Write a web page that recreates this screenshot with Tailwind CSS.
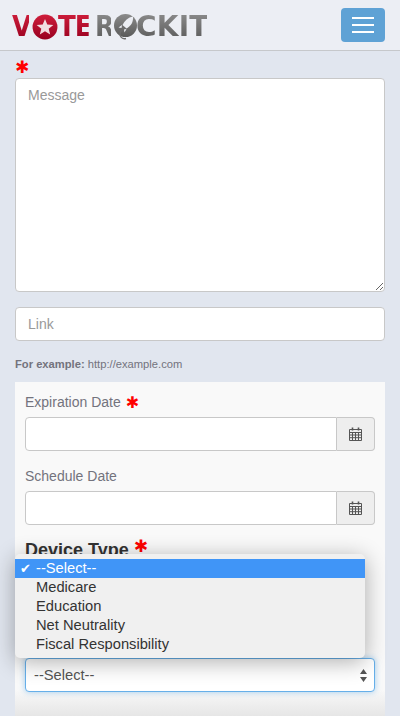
<!DOCTYPE html>
<html lang="en">
<head>
    <meta charset="UTF-8">
    <meta name="viewport" content="width=device-width, initial-scale=1.0">
    <title>VoteRockit</title>
    <script src="https://cdn.jsdelivr.net/npm/@tailwindcss/browser@4"></script>
</head>
<body class="h-[716px] w-[400px] overflow-hidden bg-[#e1e6ef] font-['Liberation_Sans',Arial,sans-serif] text-[#73737d]">
    <!-- Navbar -->
    <header class="flex h-[51px] items-start justify-between border-b border-[#c6c8cb] bg-[#eceef4] pr-[15px] pl-[12px]">
        <div class="mt-[13px] flex h-[28px] items-center text-[28px] leading-[28px] font-bold font-['DejaVu_Sans',sans-serif]">
            <span class="w-[19px] origin-left scale-x-[.9] bg-gradient-to-b from-[#cf1d3b] to-[#98001f] bg-clip-text text-transparent">V</span>
            <svg class="ml-[1px] h-[26px] w-[26px] shrink-0" viewBox="0 0 24 24">
                <defs><linearGradient id="red" x1="0" y1="0" x2="0" y2="1"><stop offset="0" stop-color="#cf1d3b"/><stop offset="1" stop-color="#98001f"/></linearGradient></defs>
                <circle cx="12" cy="12" r="11.500" fill="url(#red)"/>
                <path d="M12 4.500l2.100 5.200 5.600.4-4.300 3.500 1.400 5.400-4.800-3-4.800 3 1.400-5.400-4.300-3.500 5.600-.4z" fill="#f1dde1"/>
            </svg>
            <span class="w-[33px] origin-left scale-x-[.93] tracking-[-1px] bg-gradient-to-b from-[#cf1d3b] to-[#98001f] bg-clip-text text-transparent">TE</span>
            <span class="ml-[4px] w-[18px] origin-left scale-x-[.9] bg-gradient-to-b from-[#8b8b8b] to-[#5a5a5a] bg-clip-text text-transparent">R</span>
            <svg class="h-[28px] w-[25px] shrink-0" viewBox="0 0 25 28">
                <defs><linearGradient id="gray" x1="0" y1="0" x2="0" y2="1"><stop offset="0" stop-color="#8b8b8b"/><stop offset="1" stop-color="#5a5a5a"/></linearGradient></defs>
                <circle cx="12.500" cy="12.500" r="11.500" fill="url(#gray)"/>
                <path d="M20 3.500c-5 1-8.500 4-10.500 8.500l4 3.500c4.500-2.500 7-6.500 6.500-12z" fill="#eceef4"/>
                <path d="M9 12l-3.500 2.500 3 .5zM13.500 16l-2 3.500-.5-3z" fill="#eceef4"/>
                <path d="M9 17c-2 2-2.500 5-1 7 1 1.500 3 2 5 1.500" fill="none" stroke="#6d6d6d" stroke-width="1.300"/>
            </svg>
            <span class="ml-[-2px] w-[71px] origin-left bg-gradient-to-b from-[#8b8b8b] to-[#5a5a5a] bg-clip-text tracking-[.2px] text-transparent">CKIT</span>
        </div>
        <button class="mt-[8px] flex h-[34px] w-[44px] flex-col items-center justify-center gap-[5px] rounded-[4px] bg-[#5fa2d5]">
            <span class="h-[2px] w-[22px] bg-white"></span>
            <span class="h-[2px] w-[22px] bg-white"></span>
            <span class="h-[2px] w-[22px] bg-white"></span>
        </button>
    </header>

    <main class="relative h-[665px] overflow-hidden px-[15px]">
        <div class="h-[27px] pt-[6px] text-[17px] leading-[20px] font-['DejaVu_Sans',sans-serif] text-[#ff0000]">✱</div>

        <textarea placeholder="Message" class="block h-[214px] w-full rounded-[4px] border border-[#c8c8c8] bg-white px-[12px] py-[6px] text-[14px] leading-[20px] placeholder:text-[#999]"></textarea>

        <input placeholder="Link" class="mt-[15px] block h-[34px] w-full rounded-[4px] border border-[#c8c8c8] bg-white px-[12px] text-[14px] placeholder:text-[#999]">

        <p class="mt-[15px] h-[26px] text-[11.2px] leading-[16px]"><b>For example:</b> http://example.com</p>

        <section class="h-[334px] bg-[linear-gradient(#f9f9f9_92%,#e6e6e6)] px-[10px] pt-[8px]">
            <label class="flex h-[27px] items-center gap-[5px] pb-[2px] text-[14px]">Expiration Date <span class="text-[16px] font-['DejaVu_Sans',sans-serif] text-[#ff0000]">✱</span></label>
            <div class="flex h-[34px]">
                <input class="min-w-0 flex-1 rounded-l-[4px] border border-[#c8c8c8] bg-white">
                <span class="flex w-[38px] items-center justify-center rounded-r-[4px] border border-l-0 border-[#c8c8c8] bg-[#eeeeee]">
                    <svg class="h-[14px] w-[13px]" viewBox="0 0 13 14" fill="none" stroke="#555"><path d="M.5 2.500h12v11H.5zM.5 5.500h12M.5 8h12M.5 10.700h12M3.500 5.500v8M6.500 5.500v8M9.500 5.500v8"/><path d="M3.500 .5v3M9.500 .5v3" stroke-width="1.600"/></svg>
                </span>
            </div>
            <label class="mt-[13px] flex h-[27px] items-center pb-[2px] text-[14px]">Schedule Date</label>
            <div class="flex h-[34px]">
                <input class="min-w-0 flex-1 rounded-l-[4px] border border-[#c8c8c8] bg-white">
                <span class="flex w-[38px] items-center justify-center rounded-r-[4px] border border-l-0 border-[#c8c8c8] bg-[#eeeeee]">
                    <svg class="h-[14px] w-[13px]" viewBox="0 0 13 14" fill="none" stroke="#555"><path d="M.5 2.500h12v11H.5zM.5 5.500h12M.5 8h12M.5 10.700h12M3.500 5.500v8M6.500 5.500v8M9.500 5.500v8"/><path d="M3.500 .5v3M9.500 .5v3" stroke-width="1.600"/></svg>
                </span>
            </div>
            <label class="mt-[13px] flex h-[24px] items-center gap-[5px] text-[18px] font-bold text-[#333]">Device Type <span class="-mt-[6px] text-[17px] font-normal font-['DejaVu_Sans',sans-serif] text-[#ff0000]">✱</span></label>
            <div class="mt-[96px] flex h-[34px] items-center justify-between rounded-[4px] border border-[#66afe9] bg-white pr-[7px] pl-[8px] text-[14.7px] text-[#555] shadow-[0_0_6px_rgba(102,175,233,.6)]">
                --Select--
                <svg class="h-[13px] w-[7px]" viewBox="0 0 7 13" fill="#555"><path d="M3.500 0L7 5H0zM0 8h7l-3.500 5z"/></svg>
            </div>
        </section>

        <!-- Native select popup -->
        <ul class="absolute top-[503px] left-[15px] h-[104px] w-[350px] rounded-[5px] bg-[#f0f0f0] pt-[5px] text-[14.7px] leading-[19px] text-[#333] shadow-[0_4px_22px_rgba(0,0,0,.32)]">
            <li class="relative bg-[#4095f7] pl-[21px] text-white"><span class="absolute left-[5px] text-[13px] font-['DejaVu_Sans',sans-serif]">✔</span>--Select--</li>
            <li class="pl-[21px]">Medicare</li>
            <li class="pl-[21px]">Education</li>
            <li class="pl-[21px]">Net Neutrality</li>
            <li class="pl-[21px]">Fiscal Responsibility</li>
        </ul>
    </main>
</body>
</html>
